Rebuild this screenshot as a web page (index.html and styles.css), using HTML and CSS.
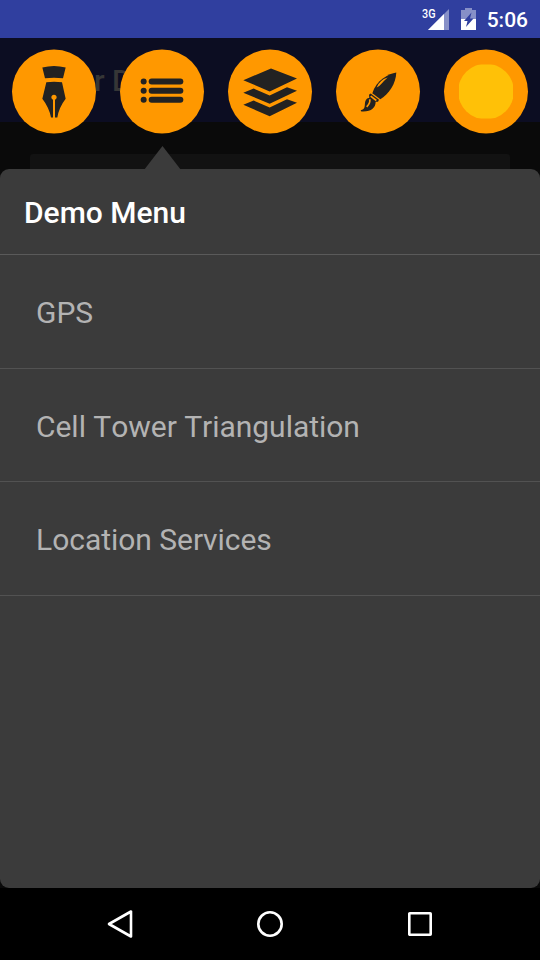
FILE: index.html
```html
<!DOCTYPE html>
<html lang="en">
<head>
<meta charset="utf-8">
<title>Demo Menu</title>
<link rel="stylesheet" href="styles.css">
</head>
<body>
<div class="screen">
  <header class="status">
    <svg class="signal" width="28" height="24" viewBox="0 0 28 24"><path class="dim" d="M6 23L27 2v21z"/><path d="M6 23L22 7V23z"/></svg>
    <span class="network">3G</span>
    <svg class="battery" width="15" height="22" viewBox="0 0 15 22"><path class="dim" d="M4 0h7v2h4v9H0V2h4z"/><path d="M0 11h15v11H0z"/><path d="M10.500 4.500L3 13H6.500L5 19L12.500 10.500H9z" fill="#303f9f"/></svg>
    <time class="clock">5:06</time>
  </header>
  <main class="app">
    <div class="appbar"><span class="title">r D</span></div>
    <nav class="tools">
      <button class="tool" aria-label="Pen"><svg viewBox="0 0 252 252"><path d="M91 54Q126 45 161 54L153 86Q126 83 99 86z"/><path d="M103 98Q126 95 150 98L161 148Q141 174 136 204H129V151A8 8 0 1 0 123 151V204H117Q111 174 91 148z"/></svg></button>
      <button class="tool" aria-label="List"><svg viewBox="0 0 252 252"><circle cx="71" cy="96" r="9"/><circle cx="71" cy="124" r="9"/><circle cx="71" cy="151" r="9"/><rect x="86" y="87" width="104" height="18" rx="9"/><rect x="86" y="115" width="104" height="18" rx="9"/><rect x="86" y="142" width="104" height="18" rx="9"/></svg></button>
      <button class="tool" aria-label="Layers"><svg viewBox="0 0 252 252"><path d="M46 92L129 57 207 87 125 126zM46 130L77 117 125 138 177 113 207 124 125 163zM46 166L77 153 125 174 177 149 207 160 125 200z"/></svg></button>
      <button class="tool" aria-label="Brush"><svg viewBox="0 0 252 252"><path d="M181 69C158 72 120 93 109 131L133 149C160 133 179 103 181 69z"/><path class="shine" d="M155 84Q130 92 122 114Q128 112 135 104Q145 93 155 84z"/><path d="M99 136L104 132 129 151 126 157 119 157C119 175 105 188 76 186L74 182C87 181 86 171 87 160C89 149 94 146 100 145z"/><path class="cut" d="M104 140L121 153M101 149Q104 160 92 172"/></svg></button>
      <button class="tool" aria-label="Color"><svg class="swatch" viewBox="0 0 54 54"><circle cx="27" cy="27" r="27.900"/></svg></button>
    </nav>
    <div class="field"></div>
    <section class="panel">
      <svg class="pointer" width="37" height="24" viewBox="0 0 37 24"><path d="M0 24L18.500 0 37 24z"/></svg>
      <h1>Demo Menu</h1>
      <ul><li>GPS</li><li>Cell Tower Triangulation</li><li>Location Services</li></ul>
    </section>
  </main>
  <footer class="navbar">
    <svg viewBox="0 0 30 30"><path d="M4 15L26 2.500v25z"/></svg>
    <svg viewBox="0 0 30 30"><circle cx="15" cy="15" r="11.700"/></svg>
    <svg viewBox="0 0 30 30"><rect x="4.300" y="4.300" width="21.400" height="21.400" rx=".5"/></svg>
  </footer>
</div>
</body>
</html>
```

FILE: styles.css
```css
* { box-sizing: border-box; }
body { margin: 0; background: #000; font-family: Roboto, sans-serif; }
.screen { width: 540px; height: 960px; display: flex; flex-direction: column; overflow: hidden; }
.status { height: 38px; background: #303f9f; color: #fff; display: flex; align-items: center; justify-content: flex-end; padding-right: 12px; position: relative; }
.status svg { fill: #fff; }
.status .dim { fill: #8790c7; }
.signal { margin-right: 11px; }
.network { position: absolute; left: 422px; top: 7px; font: 500 12px/14px Roboto, sans-serif; transform: scaleX(.9); transform-origin: left; }
.battery { margin-right: 11px; }
.clock { font-size: 21px; font-weight: 500; line-height: 38px; padding-top: 1px; }
.app { height: 850px; position: relative; background: #0a0a0a; display: flex; flex-direction: column; }
.appbar { height: 84px; background: #0c0d22; padding-left: 94px; }
.title { font-size: 30px; font-weight: 500; line-height: 86px; color: #363636; }
.tools { position: absolute; top: 11px; left: 12px; width: 516px; display: flex; justify-content: space-between; transform: translateY(.5px); }
.tool { width: 84px; height: 84px; border: 0; padding: 0; border-radius: 50%; background: #ff9800; display: flex; align-items: center; justify-content: center; }
.tool svg { width: 84px; height: 84px; fill: #222; }
.tool .shine { fill: #ff9800; }
.tool .cut { fill: none; stroke: #ff9800; stroke-width: 5; }
.tool .swatch { width: 54px; height: 54px; fill: #ffc107; overflow: hidden; }
.field { height: 15px; margin: 32px 30px 0; background: #121212; border-radius: 3px 3px 0 0; }
.panel { flex: 1; position: relative; background: #3b3b3b; border-radius: 9px; }
.pointer { position: absolute; left: 143.500px; top: -23px; fill: #3b3b3b; }
h1 { margin: 0; height: 86px; padding-left: 24px; font-size: 30px; line-height: 88px; font-weight: 500; color: #fff; border-bottom: 1px solid #5a5a5a; }
ul { list-style: none; margin: 0; padding: 0; }
li { height: 113.700px; padding-left: 36px; font-size: 30px; line-height: 116px; font-kerning: none; letter-spacing: -.03px; color: #b3b3b3; border-bottom: 1px solid #525252; }
.navbar { height: 72px; background: #000; display: flex; justify-content: center; align-items: center; gap: 120px; }
.navbar svg { width: 30px; height: 30px; fill: none; stroke: #fff; stroke-width: 2.600; stroke-linejoin: round; }
```
